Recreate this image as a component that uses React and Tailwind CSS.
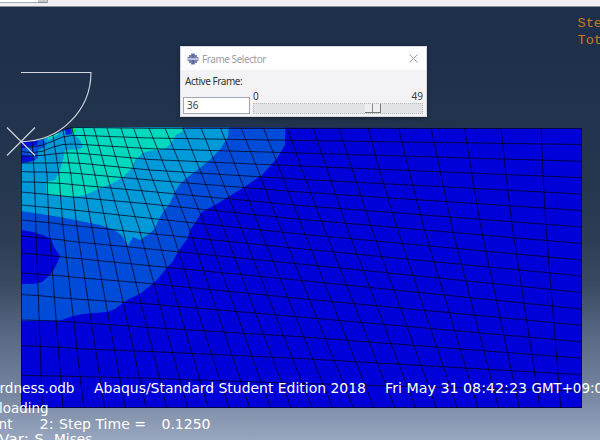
import React from 'react';

// Column x positions at y = 128, 175, 228 and 407.
const COLUMNS = [
  [21.5, 21.5, 21.5], [32, 34.3, 36], [43, 47, 49], [53, 59, 63], [63, 71, 77],
  [72, 82, 92], [83, 95, 107], [94, 107, 122.5], [107, 121, 139], [121, 136, 155],
  [133.5, 151, 171], [149, 168, 189], [165, 184.5, 206], [183, 202, 223.5], [201, 220, 241],
  [220.5, 239, 259.5], [241, 260, 280.5], [263.5, 282, 302.5], [287, 304, 324],
  [313, 329, 347], [339, 354, 371.5], [368, 381, 397], [398.5, 410, 424],
  [431, 441, 452], [464.5, 472, 481], [501, 506, 512.5], [541, 543, 546], [581.5, 581.5, 581.5],
].map(([a, b, c], k) => [a, b, c, 21.5 + k * 20.74]);
const COLUMN_YS = [128, 175, 228, 407];

// Row y positions at the sampled x values.
const ROW_XS = [21.5, 32, 43, 53, 63, 72, 83, 150, 300, 581.5];
const ROWS = [
  [141.5, 141, 138.5, 135, 130, 127.5, 127.5, 128.3, 128.5, 128.5],
  [147, 147, 145, 141, 137, 135.5, 135.5, 138, 140.5, 144.5],
  [151.5, 153, 151, 147, 144.5, 144, 144.5, 148.7, 153, 161.3],
  [156, 156, 155.3, 154, 153, 153, 153.5, 159.5, 166, 177.7],
  [163, 163, 163, 163, 162.7, 163, 163.5, 170, 179.3, 194],
  [171.5, 172, 172, 172.3, 172.6, 173, 174, 180, 192, 210.5],
  [182, 182, 182.5, 183, 183.5, 184.5, 185.5, 191.5, 205.5, 227],
  [192, 193, 194, 195, 196, 197, 198, 204, 219.3, 243.5],
  [205, 206, 207, 208, 209, 210, 211, 218.3, 234, 260],
  [220, 221, 222, 223, 224.5, 225.5, 226.5, 233.5, 248.7, 276],
  [236, 237, 238, 239, 240, 241.5, 242.5, 249, 264, 292.5],
  [253, 254, 255, 256, 257, 258, 259, 265.7, 280.3, 309],
  [273, 273.7, 274.5, 275.3, 276, 277, 278, 283.5, 298.5, 325.3],
  [294.5, 295.2, 296, 297, 298, 298.8, 299.5, 304, 317, 341.8],
  [320, 320.2, 320.5, 321, 321.5, 322, 322.8, 327.5, 336.7, 358.2],
  [345.7, 346, 346.5, 347, 347.5, 348, 349, 351.5, 358.5, 374.7],
  [375.5, 375.6, 375.8, 376, 376.2, 376.4, 376.7, 378.3, 383.5, 391],
];

const surface = COLUMNS.map((c, k) => {
  const ys = [141.5, 141, 138.5, 135, 130];
  return k < 5 ? ys[k] : 128;
});

const columnPoints = COLUMNS.map((xs, k) =>
  xs.map((x, i) => `${x},${i === 0 ? surface[k] : i === 3 ? 407.5 : COLUMN_YS[i]}`).join(' '),
);
const rowPoints = ROWS.map((ys) => ys.map((y, i) => `${ROW_XS[i]},${y}`).join(' '));

const TOP = '21,141.5 32,141 43,138.5 53,135 63,130 72,127.5 83,127.5';

function Note({ x, y, width, children }) {
  return (
    <text x={x} y={y} textLength={width} lengthAdjust="spacingAndGlyphs">
      {children}
    </text>
  );
}

function Viewport() {
  return (
    <svg width="600" height="440" viewBox="0 0 600 440" className="block">
      <defs>
        <clipPath id="body">
          <polygon points={`${TOP} 582,128 582,408 21,408`} />
        </clipPath>
      </defs>
      <g clipPath="url(#body)">
        <rect x="21" y="120" width="561" height="288" fill="#0000d8" />
        <polygon
          fill="#004cd9"
          points="21,125 285.5,125 285,145 278,157 273,163 262,175 243,188 228,197 217,204 202,212 197,220 190,230 188,238 179,250 173,261 165,270 157,280 150,286 140,294 127,300 115,309 107,312 83,314 70,317 60,320.5 21,321"
        />
        <polygon
          fill="#0000d8"
          points="21,230 33,232 45,236 51,239 54,247 60,256 56,266 50,275 42,282 33,284 21,284"
        />
        <polygon
          fill="#009ad9"
          points="21,125 229,125 228,137 221,148 212,158 200,168 188,177 180,184 175,192 170,203 163,212 158,221 155,228 150,233 140,240 133,237 128,246 122,236 115,230 100,225 75,220 60,217 21,211"
        />
        <polygon
          fill="#00d9bd"
          points="72,125 184,125 182,132 176,135 171,143 166,148 150,151 143,153 135,160 132,168 123,177 113,183 100,188 90,193 83,195.5 70,197 47,195 46,182 55,180 60,170 63,160 65,150 80,149 83,147 80,140 74,134"
        />
        <polygon fill="#00d9bd" points="46,136 60,130 58,135 48,140" />
        <polygon fill="#0050d8" points="21,141 40,139 46,142 45,147 38,150 38,158 30,162 21,163" />
        <polygon fill="#0010d8" points="21,141 38,140 37,145 21,148" />
        <polygon fill="#0010d8" points="21,155 30,156 36,160 26,162.5 21,162.5" />
        <polygon fill="#0020d8" points="64,128 71,126 72,134 66,135" />
        <polygon fill="#00dc5a" points="72,126 76,126 76,132 73,135" />
      </g>
      <g fill="none" stroke="#000018" strokeWidth="0.95" strokeOpacity="0.78">
        {columnPoints.map((p, i) => (
          <polyline key={i} points={p} />
        ))}
        {rowPoints.map((p, i) => (
          <polyline key={i} points={p} />
        ))}
        <path d="M21 407.5H582" />
      </g>
      <g fill="none" stroke="#d4d8e0" strokeWidth="1.1">
        <path d="M21 72.5H91A70 69.5 0 0 1 21 141.7" />
        <path d="M7 127.5L35 155.5M35 127.5L7 155.5" />
      </g>
      <g fill="#ffffff" fontSize="13.6" fontFamily='"DejaVu Sans", sans-serif'>
        <text x="74.5" y="392.5" textAnchor="end">hardness.odb</text>
        <Note x={94} y={392.5} width={272}>Abaqus/Standard Student Edition 2018</Note>
        <Note x={385} y={392.5} width={142}>Fri May 31 08:42:23</Note>
        <Note x={531.5} y={392.5} width={80}>GMT+09:00</Note>
        <Note x={-1} y={413.3} width={49.5}>loading</Note>
        <text x="12.5" y="429" textAnchor="end">Increment</text>
        <Note x={39.5} y={429} width={14}>2:</Note>
        <Note x={59} y={429} width={87}>Step Time =</Note>
        <Note x={161.5} y={429} width={49}>0.1250</Note>
        <Note x={-1} y={444} width={30}>Var:</Note>
        <Note x={34.5} y={444} width={14}>S,</Note>
        <Note x={54} y={444} width={38.5}>Mises</Note>
      </g>
      <g fill="#c47a20" fontSize="13.6" fontFamily='"Liberation Mono", monospace'>
        <text x="577.5" y="26.5">Step</text>
        <text x="577.5" y="43.5">Total</text>
      </g>
    </svg>
  );
}

function FrameSelector() {
  return (
    <div className="absolute left-[180px] top-[46px] flex h-[71px] w-[247px] flex-col border border-[#d8d9e0] bg-[#f3f3f5] font-['Noto_Sans',sans-serif] text-[10px] leading-3 text-[#3c3c3c] shadow-[0_1px_4px_rgba(0,0,0,0.4)]">
      <div className="flex h-[23px] shrink-0 items-center bg-[#fefdff] pl-1.5 pr-2">
        <svg width="12" height="12" viewBox="0 0 12 12" className="shrink-0">
          <path d="M4 0.5H8V2H10V4H11.5V8H10V10H8V11.5H4V10H2V8H0.5V4H2V2H4Z" fill="#7780b0" />
          <path d="M0.5 6H11.5" stroke="#fff" strokeWidth="1" />
          <path d="M6 1V5M6 7V11" stroke="#4c568f" strokeWidth="1" />
        </svg>
        <span className="ml-[3px] grow whitespace-nowrap tracking-[-0.45px] text-[#a0a0a4]">Frame Selector</span>
        <svg width="9" height="9" viewBox="0 0 9 9" className="shrink-0">
          <path d="M0.5 0.5L8.5 8.5M8.5 0.5L0.5 8.5" stroke="#93939b" strokeWidth="0.9" />
        </svg>
      </div>
      <div className="h-[18px] shrink-0 whitespace-nowrap pl-1 pt-[5px] tracking-[-0.45px] text-[#333]">Active Frame:</div>
      <div className="flex grow gap-[3px] pl-[2px] pr-[3px]">
        <div className="mt-[9px] h-[17px] w-[67px] shrink-0 border border-[#a3a6b4] bg-white pl-[3px] leading-[14px]">36</div>
        <div className="flex grow flex-col">
          <div className="flex h-[15px] shrink-0 items-center justify-between">
            <span>0</span>
            <span>49</span>
          </div>
          <div className="flex h-[11px] border border-dotted border-[#b9bbc2] bg-[#e2e3e6] pl-[111px]">
            <div className="flex h-[9px] w-4 border-b border-r border-[#777] bg-[#efeff1]">
              <div className="h-full w-2 border-r border-[#8a8a8a]" />
            </div>
          </div>
        </div>
      </div>
    </div>
  );
}

export default function App() {
  return (
    <div className="relative h-[440px] w-[600px] overflow-hidden bg-[linear-gradient(to_bottom,#1c2e49_0px,#20324c_100px,#26384f_190px,#2c3d55_240px,#3a4a62_285px,#566680_330px,#7887a1_395px,#98a6c0_440px)]">
      <Viewport />
      <div className="absolute left-0 top-0 flex h-[7px] w-[600px] border-b border-[#8c8f94] bg-[#efeef2]">
        <div className="flex h-[3px] w-[48px] justify-end border-b border-r border-[#a5a8b0] bg-white">
          <div className="h-[3px] w-[9px] border-b border-[#85888f] bg-[#c9cbd2]" />
        </div>
      </div>
      <FrameSelector />
    </div>
  );
}
